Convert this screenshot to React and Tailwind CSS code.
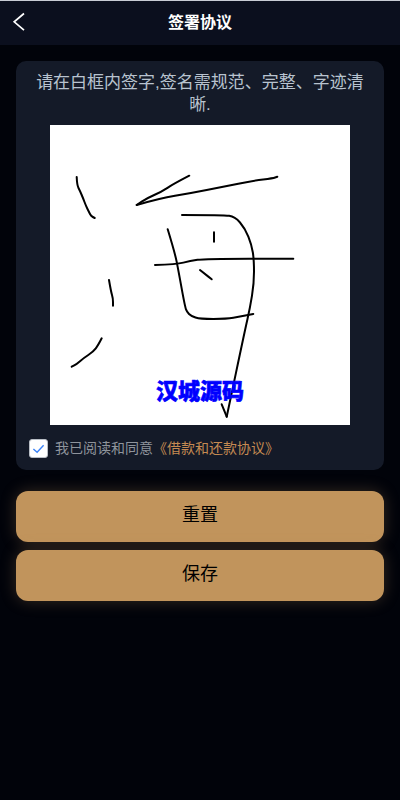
import React, { useState } from 'react';

// Signature strokes, in canvas coordinates (300x300)
const strokes = [
    [[26.7, 52], [27, 60], [30, 66], [33, 73], [36, 81], [39, 87], [41, 91], [44.7, 93]],
    [[139.3, 50.7], [123.3, 59], [111.7, 66.7], [96.7, 73.3], [86.7, 80]],
    [[86.7, 80], [110, 73.3], [140, 68.3], [173.3, 61.7], [203.3, 55.7], [223, 53.3], [227.3, 51.7]],
    [[132, 90], [173.3, 90], [185, 91.7], [195, 103.3], [201.7, 120], [204, 135], [204, 158.3], [200, 183], [195, 205], [176.7, 291.7]],
    [[176.7, 291.7], [171.7, 279.3]],
    [[117.7, 104.3], [125, 128.3], [128.3, 145], [135, 181.7], [137, 187], [141, 191], [150, 194], [176.7, 194], [190, 191.7], [203.3, 189]],
    [[105, 140], [126.7, 139.3], [140, 136], [155, 133.7], [243.3, 133.7]],
    [[164, 107.3], [164, 116.7]],
    [[150, 145], [155, 149], [161.7, 154.3]],
    [[59, 155], [61, 166.7], [63, 173.3], [63, 180.7]],
    [[51.7, 213.3], [48.3, 220], [43.3, 226.7], [33.3, 233.3], [26.7, 239], [21.7, 241.7]],
];

// Smooth a list of points through the midpoints of its segments
const toPath = (pts) => {
    let d = `M${pts[0][0]} ${pts[0][1]}`;
    for (let i = 1; i < pts.length - 1; i++) {
        const mx = (pts[i][0] + pts[i + 1][0]) / 2;
        const my = (pts[i][1] + pts[i + 1][1]) / 2;
        d += ` Q${pts[i][0]} ${pts[i][1]} ${mx} ${my}`;
    }
    const last = pts[pts.length - 1];
    return `${d} L${last[0]} ${last[1]}`;
};

const App = () => {
    const [agreed, setAgreed] = useState(true);

    return (
        <div className="min-h-[800px] w-full bg-[#01030a] font-['Liberation_Sans','Noto_Sans_CJK_SC',sans-serif]">
            {/* Header */}
            <header className="relative flex h-[45px] items-center justify-center border-t border-[#c8ccd4] bg-[#0b0f1e]">
                <svg viewBox="0 0 14 20" className="absolute left-[12px] top-[11px] h-[20px] w-[14px]" fill="none" stroke="#fff" strokeWidth="1.7">
                    <path d="M12 1.5 L2.2 9.8 L12 18.2" />
                </svg>
                <h1 className="text-[16px] font-bold text-white">签署协议</h1>
            </header>

            <main className="flex flex-col px-4 pt-4">
                {/* Signature card */}
                <section className="flex h-[409px] flex-col items-center rounded-[10px] bg-[#141a28] pt-[11px]">
                    <p className="w-[332px] text-center text-[17px] leading-[22px] text-[#b8c3cf]">
                        请在白框内签字,签名需规范、完整、字迹清晰.
                    </p>
                    <div className="relative mt-[9px] size-[300px] bg-white">
                        <svg viewBox="0 0 300 300" className="size-full" fill="none" stroke="#000" strokeWidth="2" strokeLinecap="round" strokeLinejoin="round">
                            {strokes.map((pts) => <path key={pts.join()} d={toPath(pts)} />)}
                        </svg>
                        <span className="absolute left-[106px] top-[255px] text-[22px] font-black leading-[24px] text-[#0000ff] [-webkit-text-stroke:0.6px_#0000ff]">汉城源码</span>
                    </div>
                    <label className="mt-[13px] flex w-full items-center pl-[13px]">
                        <input type="checkbox" checked={agreed} onChange={(e) => setAgreed(e.target.checked)} className="peer sr-only" />
                        <span className="flex size-[19px] items-center justify-center rounded-[3px] border border-[#b9bec6] bg-white">
                            {agreed && (
                                <svg viewBox="0 0 14 14" className="size-[13px]" fill="none" stroke="#3b82f6" strokeWidth="1.5">
                                    <path d="M1.5 7.5 L5.5 11 L12.5 3.5" />
                                </svg>
                            )}
                        </span>
                        <span className="ml-[7px] text-[14px] text-[#8f949c]">
                            我已阅读和同意<span className="text-[#c58a52]">《借款和还款协议》</span>
                        </span>
                    </label>
                </section>

                {/* Actions */}
                <div className="mt-[21px] flex flex-col gap-2">
                    <button className="h-[51px] rounded-[12px] bg-[#c1945c] pb-[2px] text-[18px] text-black shadow-[0_0_16px_rgba(193,148,92,0.28)]">重置</button>
                    <button className="h-[51px] rounded-[12px] bg-[#c1945c] pb-[2px] text-[18px] text-black shadow-[0_0_16px_rgba(193,148,92,0.28)]">保存</button>
                </div>
            </main>
        </div>
    );
};

export default App;
